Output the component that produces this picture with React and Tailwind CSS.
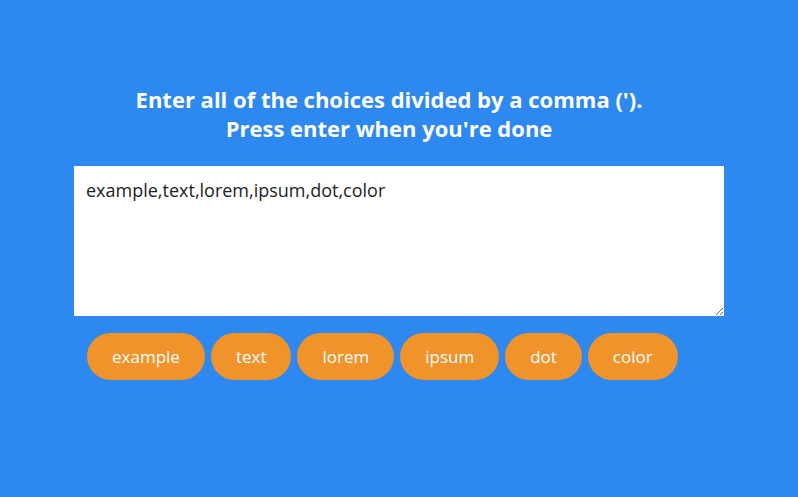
import React, { useState } from 'react';

export default function App() {
  const [value, setValue] = useState('example,text,lorem,ipsum,dot,color');
  const choices = value.split(',').map(c => c.trim()).filter(Boolean);

  return (
    <div className="min-h-screen w-full bg-[#2d89ef] font-['Open_Sans','Noto_Sans',sans-serif]">
      <div className="mx-auto w-[650px] pt-[85px]">
        <h3 className="pr-[20px] text-center text-[22px] font-bold leading-[29px] text-white">
          Enter all of the choices divided by a comma (').
          <br />
          Press enter when you're done
        </h3>
        <textarea
          value={value}
          onChange={e => setValue(e.target.value)}
          className="mt-[23px] block h-[150px] w-[650px] resize-y bg-white px-[12px] py-[11px] text-[18px] leading-[27px] text-[#222] outline-none"
        />
        <div className="flex flex-wrap gap-[6px] px-[13px] pt-[17px]">
          {choices.map((c, i) => (
            <span
              key={i}
              className="flex h-[47px] items-center rounded-full bg-[#f0932b] px-[25px] text-[17px] text-white"
            >
              {c}
            </span>
          ))}
        </div>
      </div>
    </div>
  );
}
